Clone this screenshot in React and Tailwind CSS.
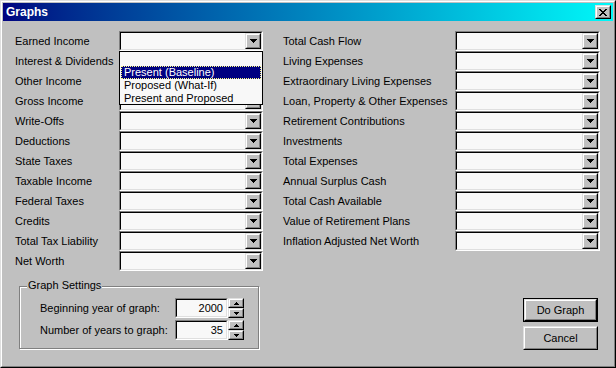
import React from "react";

const leftRows = [
  "Earned Income",
  "Interest & Dividends",
  "Other Income",
  "Gross Income",
  "Write-Offs",
  "Deductions",
  "State Taxes",
  "Taxable Income",
  "Federal Taxes",
  "Credits",
  "Total Tax Liability",
  "Net Worth",
];

const rightRows = [
  "Total Cash Flow",
  "Living Expenses",
  "Extraordinary Living Expenses",
  "Loan, Property & Other Expenses",
  "Retirement Contributions",
  "Investments",
  "Total Expenses",
  "Annual Surplus Cash",
  "Total Cash Available",
  "Value of Retirement Plans",
  "Inflation Adjusted Net Worth",
];

// classic raised / sunken bevels
const raised =
  "border border-t-[#dfdfdf] border-l-[#dfdfdf] border-b-black border-r-black";
const raisedInner =
  "border border-t-white border-l-white border-b-[#808080] border-r-[#808080]";
const sunken =
  "border border-t-[#808080] border-l-[#808080] border-b-white border-r-white";
const sunkenInner =
  "border border-t-black border-l-black border-b-[#dfdfdf] border-r-[#dfdfdf]";

function DownArrow() {
  return (
    <svg width="7" height="4" viewBox="0 0 7 4">
      <path d="M0 0h7v1H6v1H5v1H4v1H3V3H2V2H1V1H0z" fill="black" />
    </svg>
  );
}

function UpArrow() {
  return (
    <svg width="5" height="3" viewBox="0 0 5 3">
      <path d="M2 0h1v1h1v1h1v1H0V2h1V1h1z" fill="black" />
    </svg>
  );
}

function SmallDown() {
  return (
    <svg width="5" height="3" viewBox="0 0 5 3">
      <path d="M0 0h5v1H4v1H3v1H2V2H1V1H0z" fill="black" />
    </svg>
  );
}

function Combo({ width }) {
  return (
    <div className={`${sunken} h-5 ${width}`}>
      <div className={`${sunkenInner} h-full bg-[#f8f8f8] flex justify-end`}>
        <div className={`${raised} w-4 h-full bg-[#c0c0c0]`}>
          <div className={`${raisedInner} h-full flex items-center justify-center`}>
            <DownArrow />
          </div>
        </div>
      </div>
    </div>
  );
}

function Spin({ value }) {
  return (
    <div className="flex items-stretch h-5">
      <div className={`${sunken} w-[53px]`}>
        <div className={`${sunkenInner} h-full bg-[#f8f8f8] flex items-center justify-end pr-[3px]`}>
          {value}
        </div>
      </div>
      <div className="flex flex-col w-4">
        <div className={`${raised} h-[10px] bg-[#c0c0c0]`}>
          <div className={`${raisedInner} h-full flex items-center justify-center`}>
            <UpArrow />
          </div>
        </div>
        <div className={`${raised} h-[10px] bg-[#c0c0c0]`}>
          <div className={`${raisedInner} h-full flex items-center justify-center`}>
            <SmallDown />
          </div>
        </div>
      </div>
    </div>
  );
}

function Button({ label, isDefault }) {
  return (
    <div className={`w-[75px] h-6 ${isDefault ? "border border-black" : ""}`}>
      <div className={`${raised} h-full bg-[#c0c0c0]`}>
        <div className={`${raisedInner} h-full flex items-center justify-center`}>
          {label}
        </div>
      </div>
    </div>
  );
}

export default function App() {
  return (
    <div
      className="w-[616px] h-[368px] bg-[#c0c0c0] text-[11px] text-black leading-none overflow-hidden select-none"
      style={{ fontFamily: '"Liberation Sans", Arial, sans-serif' }}
    >
      <div className={`${raised} w-full h-full`}>
        <div className={`${raisedInner} w-full h-full p-px flex flex-col`}>
          {/* Title bar */}
          <div className="h-[18px] flex items-center justify-between pl-[3px] pr-[2px] bg-gradient-to-r from-[#000080] to-[#00f8f8]">
            <span className="text-white font-bold text-[12px]">Graphs</span>
            <div className={`${raised} w-4 h-[14px] bg-[#c0c0c0]`}>
              <div className={`${raisedInner} h-full flex items-center justify-center`}>
                <svg width="8" height="7" viewBox="0 0 8 7">
                  <path
                    d="M0 0h2v1h1v1h2V1h1V0h2v1H7v1H6v1H5v1h1v1h1v1h1v1H6V6H5V5H3v1H2v1H0V6h1V5h1V4h1V3H2V2H1V1H0z"
                    fill="black"
                  />
                </svg>
              </div>
            </div>
          </div>

          {/* Combo columns */}
          <div className="flex pt-[10px] pl-[12px]">
            <div className="relative flex flex-col">
              {leftRows.map((r) => (
                <div key={r} className="flex items-center h-5">
                  <span className="w-[104px]">{r}</span>
                  <Combo width="w-[144px]" />
                </div>
              ))}
              {/* open dropdown list */}
              <div className="absolute left-[104px] top-5 w-[144px] h-[54px] bg-[#f8f8f8] border border-black pt-[2px] pl-px pr-px">
                <div className="h-[12px]" />
                <div className="h-[13px] bg-[#000080] text-white flex items-center pl-[2px] border border-dotted border-[#ffff80]">
                  Present (Baseline)
                </div>
                <div className="h-[13px] flex items-center pl-[3px]">Proposed (What-If)</div>
                <div className="h-[13px] flex items-center pl-[3px]">Present and Proposed</div>
              </div>
            </div>
            <div className="flex flex-col ml-5">
              {rightRows.map((r) => (
                <div key={r} className="flex items-center h-5">
                  <span className="w-[172px]">{r}</span>
                  <Combo width="w-[145px]" />
                </div>
              ))}
            </div>
          </div>

          {/* Bottom area */}
          <div className="flex justify-between items-start mt-[15px] pl-[16px] pr-[15px]">
            <div className="relative w-[240px] h-[63px] border border-[#808080] shadow-[1px_1px_0_#fff,inset_1px_1px_0_#fff] pt-[11px] pl-5">
              <span className="absolute -top-[7px] left-[7px] bg-[#c0c0c0] px-px">Graph Settings</span>
              <div className="flex items-center">
                <span className="w-[135px]">Beginning year of graph:</span>
                <Spin value="2000" />
              </div>
              <div className="flex items-center mt-[2px]">
                <span className="w-[135px]">Number of years to graph:</span>
                <Spin value="35" />
              </div>
            </div>
            <div className="flex flex-col gap-1 mt-[12px]">
              <Button label="Do Graph" isDefault />
              <Button label="Cancel" />
            </div>
          </div>
        </div>
      </div>
    </div>
  );
}
